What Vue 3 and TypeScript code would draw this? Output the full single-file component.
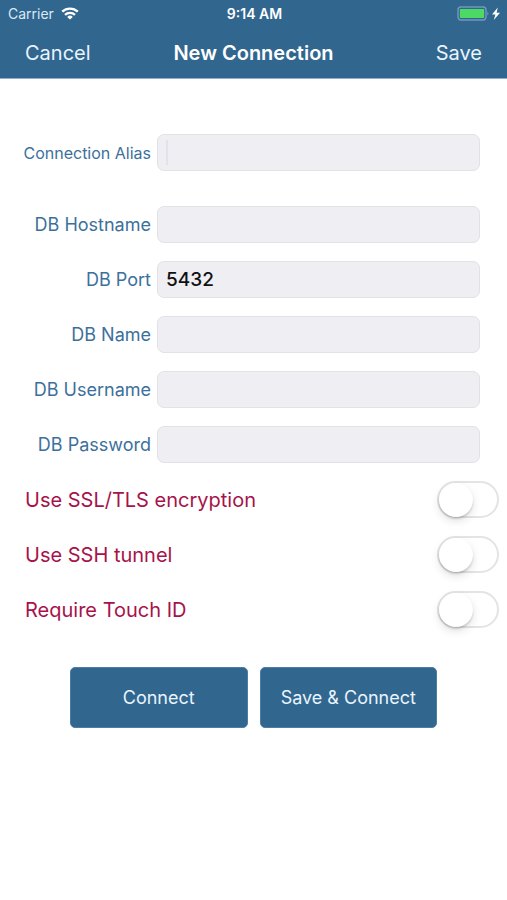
<script setup lang="ts">
import { reactive } from 'vue'

interface Field {
  id: string
  label: string
  type: string
  value: string
  lead?: boolean
}

interface Option {
  id: string
  label: string
  on: boolean
}

const fields = reactive<Field[]>([
  { id: 'alias', label: 'Connection Alias', type: 'text', value: '', lead: true },
  { id: 'host', label: 'DB Hostname', type: 'text', value: '' },
  { id: 'port', label: 'DB Port', type: 'text', value: '5432' },
  { id: 'name', label: 'DB Name', type: 'text', value: '' },
  { id: 'user', label: 'DB Username', type: 'text', value: '' },
  { id: 'password', label: 'DB Password', type: 'password', value: '' },
])

const options = reactive<Option[]>([
  { id: 'ssl', label: 'Use SSL/TLS encryption', on: false },
  { id: 'ssh', label: 'Use SSH tunnel', on: false },
  { id: 'touch', label: 'Require Touch ID', on: false },
])
</script>

<template>
  <div class="screen">
    <header class="top">
      <div class="status">
        <div class="carrier">
          <span>Carrier</span>
          <svg class="wifi" viewBox="0 0 18 13" width="18" height="13" aria-hidden="true">
            <g fill="none" stroke="#fff" stroke-width="2.3">
              <path d="M1.2 4.7A11.2 11.2 0 0 1 16.8 4.7" />
              <path d="M4 7.8A7.2 7.2 0 0 1 14 7.8" />
            </g>
            <path d="M9 12.6L6.2 9.9A4 4 0 0 1 11.8 9.9Z" fill="#fff" />
          </svg>
        </div>
        <span class="time">9:14 AM</span>
        <div class="power">
          <svg viewBox="0 0 44 16" width="44" height="16" aria-hidden="true">
            <rect x="1" y="1" width="28" height="13" rx="3" fill="none" stroke="#7298bb" stroke-width="1.4" />
            <rect x="2.8" y="2.9" width="24.4" height="9.2" rx="0.8" fill="#4cd964" />
            <path d="M30.4 5.2Q32.6 7.5 30.4 9.8Z" fill="#7298bb" />
            <path d="M40.8 1.6L35 8.5H38.4L36.8 14L43 6.7H39.6Z" fill="#fff" />
          </svg>
        </div>
      </div>
      <nav class="bar">
        <button type="button" class="action">Cancel</button>
        <h1 class="title">New Connection</h1>
        <button type="button" class="action end">Save</button>
      </nav>
    </header>

    <form class="form" @submit.prevent>
      <div class="fields">
        <div v-for="f in fields" :key="f.id" class="field" :class="{ lead: f.lead }">
          <label :for="f.id">{{ f.label }}</label>
          <div class="box">
            <input :id="f.id" v-model="f.value" :type="f.type" autocomplete="off" />
            <span v-if="f.lead" class="caret" aria-hidden="true"></span>
          </div>
        </div>
      </div>

      <div class="options">
        <div v-for="o in options" :key="o.id" class="option">
          <label :for="o.id">{{ o.label }}</label>
          <input :id="o.id" v-model="o.on" type="checkbox" role="switch" class="switch" />
        </div>
      </div>

      <div class="buttons">
        <button type="button">Connect</button>
        <button type="submit">Save &amp; Connect</button>
      </div>
    </form>
  </div>
</template>

<style>
body {
  background: #fff;
}
</style>

<style scoped>
.screen {
  min-height: 100vh;
  background: #fff;
  font-family: Inter, "Liberation Sans", sans-serif;
}
button,
input {
  font-family: inherit;
  margin: 0;
}
.top {
  background: #31668f;
  border-bottom: 1px solid #8fb0cc;
  color: #fff;
}
.status {
  display: grid;
  grid-template-columns: 1fr auto 1fr;
  align-items: center;
  height: 27px;
  padding: 0 6px 0 8px;
  font-size: 14px;
}
.carrier {
  display: flex;
  align-items: center;
  gap: 7px;
  color: #dbe9f5;
}
.time {
  font-weight: 600;
}
.power {
  display: flex;
  justify-content: flex-end;
}
.bar {
  display: grid;
  grid-template-columns: 1fr auto 1fr;
  align-items: center;
  height: 51px;
  padding: 0 25px;
}
.action {
  justify-self: start;
  padding: 0;
  border: 0;
  background: none;
  color: #e9f4fd;
  font-size: 20px;
}
.action.end {
  justify-self: end;
}
.title {
  margin: 0;
  font-size: 20px;
  font-weight: 600;
}
.form {
  padding-top: 55px;
}
.fields {
  display: flex;
  flex-direction: column;
  gap: 18px;
  padding: 0 27px 0 16px;
}
.field {
  display: grid;
  grid-template-columns: 135px 1fr;
  align-items: center;
  gap: 6px;
}
.field label {
  color: #3c709c;
  font-size: 18px;
  text-align: right;
  white-space: nowrap;
}
.field.lead {
  margin-bottom: 17px;
}
.field.lead label {
  font-size: 16px;
}
.box {
  position: relative;
}
.box input {
  display: block;
  box-sizing: border-box;
  width: 100%;
  height: 37px;
  padding: 0 8px;
  border: 1px solid #e2e2e6;
  border-radius: 7px;
  outline: 0;
  background: #eeeef3;
  color: #111;
  font-size: 19px;
  font-weight: 500;
}
.caret {
  position: absolute;
  top: 6px;
  left: 9px;
  width: 2px;
  height: 25px;
  background: #e1e2ea;
}
.options {
  display: flex;
  flex-direction: column;
  gap: 18px;
  padding: 18px 8px 0 25px;
}
.option {
  display: flex;
  align-items: center;
  justify-content: space-between;
  height: 37px;
}
.option label {
  color: #a6134a;
  font-size: 20px;
}
.switch {
  appearance: none;
  display: flex;
  align-items: center;
  box-sizing: border-box;
  width: 62px;
  height: 37px;
  border: 2px solid #e4e4e4;
  border-radius: 19px;
  background: #fff;
}
.switch::before {
  content: "";
  width: 34px;
  height: 34px;
  border-radius: 50%;
  background: #fff;
  box-shadow: 0 4px 10px rgba(0, 0, 0, 0.12), 0 2px 2px rgba(0, 0, 0, 0.14);
}
.switch:checked {
  border-color: #4cd964;
  background: #4cd964;
}
.switch:checked::before {
  margin-left: 24px;
}
.buttons {
  display: grid;
  grid-template-columns: 1fr 1fr;
  gap: 12px;
  padding: 39px 70px 40px;
}
.buttons button {
  height: 61px;
  padding: 0;
  border: 1px solid #4d7da6;
  border-radius: 5px;
  background: #31668f;
  color: #e9f4fd;
  font-size: 18px;
}
</style>
